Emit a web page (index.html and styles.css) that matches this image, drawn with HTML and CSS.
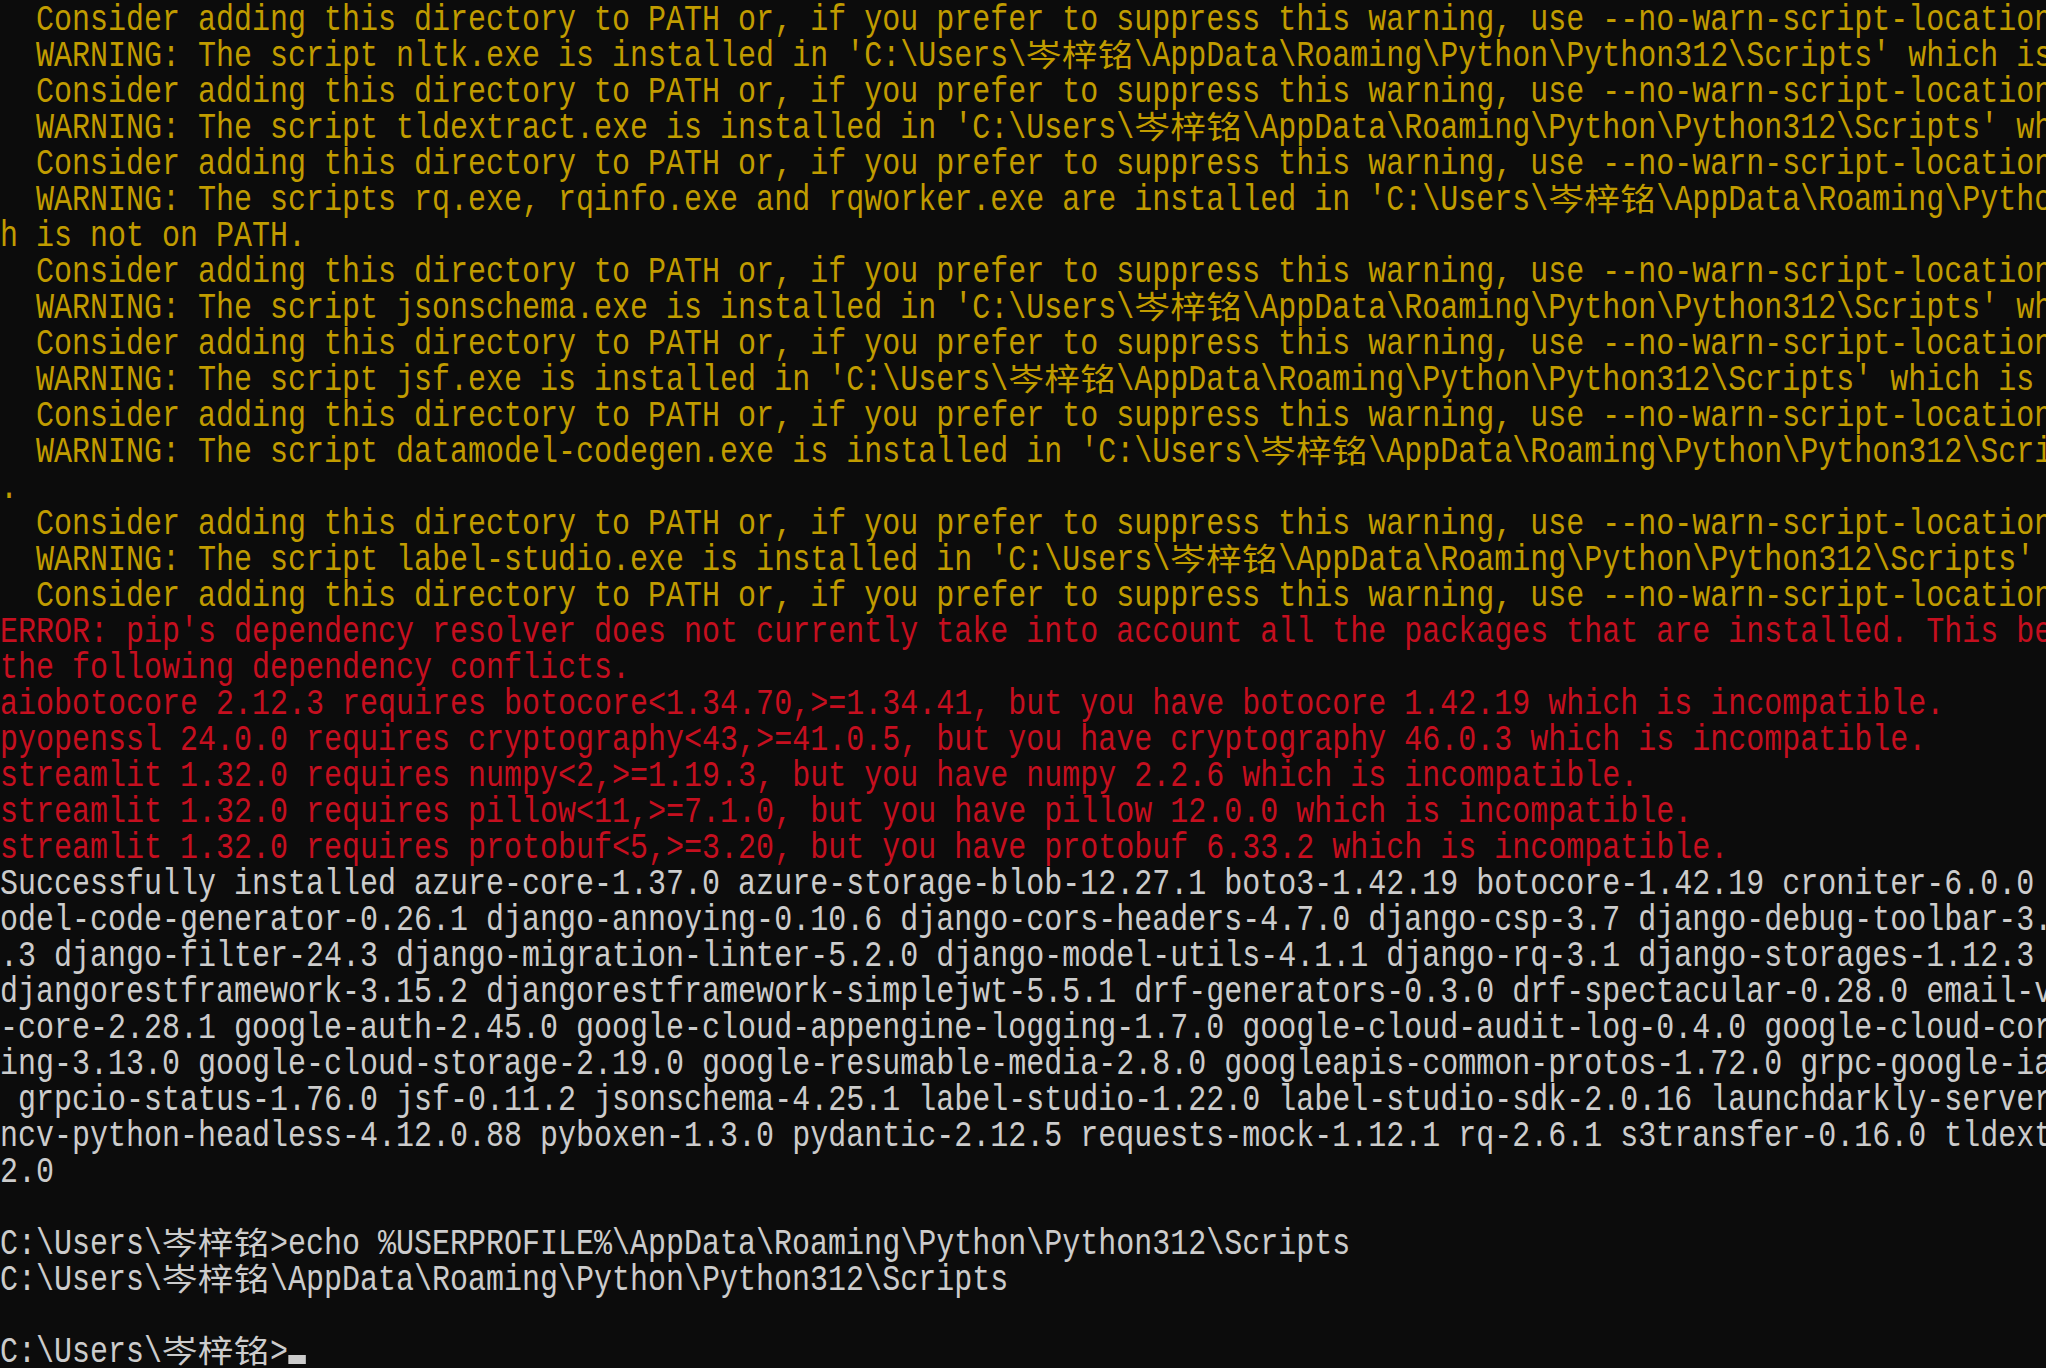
FILE: index.html
```html
<!DOCTYPE html>
<html>
<head>
<meta charset="utf-8">
<link rel="stylesheet" href="styles.css">
</head>
<body>
<div class="screen">
<div class="line y">  Consider adding this directory to PATH or, if you prefer to suppress this warning, use --no-warn-script-location.</div>
<div class="line y">  WARNING: The script nltk.exe is installed in 'C:\Users\<span class="cjk">岑梓铭</span>\AppData\Roaming\Python\Python312\Scripts' which is not on PATH.</div>
<div class="line y">  Consider adding this directory to PATH or, if you prefer to suppress this warning, use --no-warn-script-location.</div>
<div class="line y">  WARNING: The script tldextract.exe is installed in 'C:\Users\<span class="cjk">岑梓铭</span>\AppData\Roaming\Python\Python312\Scripts' which is not on PATH.</div>
<div class="line y">  Consider adding this directory to PATH or, if you prefer to suppress this warning, use --no-warn-script-location.</div>
<div class="line y">  WARNING: The scripts rq.exe, rqinfo.exe and rqworker.exe are installed in 'C:\Users\<span class="cjk">岑梓铭</span>\AppData\Roaming\Python\Python312\Scripts' whic</div>
<div class="line y">h is not on PATH.</div>
<div class="line y">  Consider adding this directory to PATH or, if you prefer to suppress this warning, use --no-warn-script-location.</div>
<div class="line y">  WARNING: The script jsonschema.exe is installed in 'C:\Users\<span class="cjk">岑梓铭</span>\AppData\Roaming\Python\Python312\Scripts' which is not on PATH.</div>
<div class="line y">  Consider adding this directory to PATH or, if you prefer to suppress this warning, use --no-warn-script-location.</div>
<div class="line y">  WARNING: The script jsf.exe is installed in 'C:\Users\<span class="cjk">岑梓铭</span>\AppData\Roaming\Python\Python312\Scripts' which is not on PATH.</div>
<div class="line y">  Consider adding this directory to PATH or, if you prefer to suppress this warning, use --no-warn-script-location.</div>
<div class="line y">  WARNING: The script datamodel-codegen.exe is installed in 'C:\Users\<span class="cjk">岑梓铭</span>\AppData\Roaming\Python\Python312\Scripts' which is not on PATH</div>
<div class="line y">.</div>
<div class="line y">  Consider adding this directory to PATH or, if you prefer to suppress this warning, use --no-warn-script-location.</div>
<div class="line y">  WARNING: The script label-studio.exe is installed in 'C:\Users\<span class="cjk">岑梓铭</span>\AppData\Roaming\Python\Python312\Scripts' which is not on PATH.</div>
<div class="line y">  Consider adding this directory to PATH or, if you prefer to suppress this warning, use --no-warn-script-location.</div>
<div class="line r">ERROR: pip's dependency resolver does not currently take into account all the packages that are installed. This behaviour is the source of </div>
<div class="line r">the following dependency conflicts.</div>
<div class="line r">aiobotocore 2.12.3 requires botocore&lt;1.34.70,&gt;=1.34.41, but you have botocore 1.42.19 which is incompatible.</div>
<div class="line r">pyopenssl 24.0.0 requires cryptography&lt;43,&gt;=41.0.5, but you have cryptography 46.0.3 which is incompatible.</div>
<div class="line r">streamlit 1.32.0 requires numpy&lt;2,&gt;=1.19.3, but you have numpy 2.2.6 which is incompatible.</div>
<div class="line r">streamlit 1.32.0 requires pillow&lt;11,&gt;=7.1.0, but you have pillow 12.0.0 which is incompatible.</div>
<div class="line r">streamlit 1.32.0 requires protobuf&lt;5,&gt;=3.20, but you have protobuf 6.33.2 which is incompatible.</div>
<div class="line w">Successfully installed azure-core-1.37.0 azure-storage-blob-12.27.1 boto3-1.42.19 botocore-1.42.19 croniter-6.0.0 cryptography-46.0.3 datam</div>
<div class="line w">odel-code-generator-0.26.1 django-annoying-0.10.6 django-cors-headers-4.7.0 django-csp-3.7 django-debug-toolbar-3.2.0 django-extensions-3.2</div>
<div class="line w">.3 django-filter-24.3 django-migration-linter-5.2.0 django-model-utils-4.1.1 django-rq-3.1 django-storages-1.12.3 django-user-agents-0.4.0 </div>
<div class="line w">djangorestframework-3.15.2 djangorestframework-simplejwt-5.5.1 drf-generators-0.3.0 drf-spectacular-0.28.0 email-validator-2.3.0 google-api</div>
<div class="line w">-core-2.28.1 google-auth-2.45.0 google-cloud-appengine-logging-1.7.0 google-cloud-audit-log-0.4.0 google-cloud-core-2.5.0 google-cloud-logg</div>
<div class="line w">ing-3.13.0 google-cloud-storage-2.19.0 google-resumable-media-2.8.0 googleapis-common-protos-1.72.0 grpc-google-iam-v1-0.14.3 grpcio-1.76.0</div>
<div class="line w"> grpcio-status-1.76.0 jsf-0.11.2 jsonschema-4.25.1 label-studio-1.22.0 label-studio-sdk-2.0.16 launchdarkly-server-sdk-9.14.1 nltk-3.9.2 o</div>
<div class="line w">ncv-python-headless-4.12.0.88 pyboxen-1.3.0 pydantic-2.12.5 requests-mock-1.12.1 rq-2.6.1 s3transfer-0.16.0 tldextract-5.3.0 xmljson-0.</div>
<div class="line w">2.0</div>
<div class="line w"></div>
<div class="line w">C:\Users\<span class="cjk">岑梓铭</span>&gt;echo %USERPROFILE%\AppData\Roaming\Python\Python312\Scripts</div>
<div class="line w">C:\Users\<span class="cjk">岑梓铭</span>\AppData\Roaming\Python\Python312\Scripts</div>
<div class="line w"></div>
<div class="line w">C:\Users\<span class="cjk">岑梓铭</span>&gt;<span class="cursor"></span></div>
</div>
</body>
</html>
```
FILE: styles.css
```css
html, body {
  margin: 0;
  padding: 0;
  background: #0c0c0c;
  overflow: hidden;
  width: 2046px;
  height: 1368px;
}

.screen {
  width: 2456px;
  padding-top: 3px;
  transform: scaleX(0.833333);
  transform-origin: 0 0;
  font-family: "Liberation Mono", "DejaVu Sans Mono", monospace;
  font-size: 36px;
  color: #cccccc;
}

.line {
  height: 36px;
  line-height: 36px;
  white-space: pre;
}

.y { color: #c19c00; }
.r { color: #c50f1f; }
.w { color: #cccccc; }

.cjk {
  display: inline-block;
  width: 129.6px;
  line-height: 0;
  font-family: "Noto Sans CJK SC", sans-serif;
  font-size: 31px;
  letter-spacing: 0.4px;
  transform: scaleX(1.376);
  transform-origin: 0 50%;
  vertical-align: baseline;
}

.cursor {
  display: inline-block;
  width: 21.6px;
  height: 9px;
  background: #cccccc;
  vertical-align: -2.4px;
}
```
